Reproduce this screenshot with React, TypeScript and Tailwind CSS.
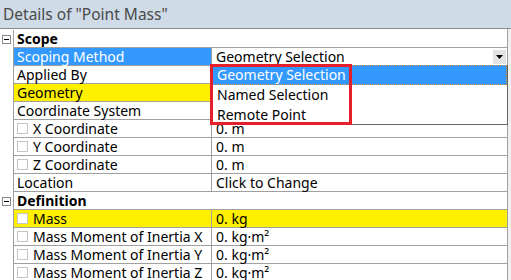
import React from "react";

type Row = {
  label: string;
  value?: string;
  check?: boolean;
  labelClass?: string;
  rowClass?: string;
  dropdown?: boolean;
};

function MinusBox() {
  return (
    <span className="flex h-[9px] w-[9px] items-center justify-center border border-[#8a8a8a] bg-white">
      <span className="h-px w-[5px] bg-black" />
    </span>
  );
}

function CheckBox() {
  return <span className="mr-[5px] inline-block h-[11px] w-[11px] shrink-0 border border-[#c4c4c4] bg-white" />;
}

function Section({ title }: { title: string }) {
  return (
    <div className="flex">
      <div className="flex w-[14px] shrink-0 items-center justify-center border-r border-[#a0a0a0] pr-px">
        <MinusBox />
      </div>
      <div className="flex h-[18px] flex-1 items-center border-b border-[#a0a0a0] pl-[3px] font-bold text-black">
        {title}
      </div>
    </div>
  );
}

function Prop({ row }: { row: Row }) {
  return (
    <div className={`flex ${row.rowClass ?? ""}`}>
      <div className="w-[14px] shrink-0 border-r border-[#a0a0a0] bg-white" />
      <div
        className={`flex h-[18px] w-[198px] shrink-0 items-center border-b border-r border-[#a0a0a0] pl-[3px] whitespace-nowrap ${
          row.labelClass ?? ""
        }`}
      >
        {row.check && <CheckBox />}
        {row.label}
      </div>
      <div className="flex h-[18px] flex-1 items-center justify-between border-b border-[#a0a0a0] pl-[4px] whitespace-nowrap">
        <span>{row.value}</span>
        {row.dropdown && (
          <span className="mr-px flex h-[14px] w-[13px] items-center justify-center bg-[#e3e3e3]">
            <svg width="7" height="4" viewBox="0 0 7 4">
              <path d="M0 0h7L3.5 4z" fill="#000" />
            </svg>
          </span>
        )}
      </div>
    </div>
  );
}

const scope: Row[] = [
  { label: "Scoping Method", value: "Geometry Selection", labelClass: "bg-[#3399ff] text-white", dropdown: true },
  { label: "Applied By", value: "" },
  { label: "Geometry", value: "", labelClass: "bg-[#fff000]" },
  { label: "Coordinate System", value: "" },
  { label: "X Coordinate", value: "0. m", check: true },
  { label: "Y Coordinate", value: "0. m", check: true },
  { label: "Z Coordinate", value: "0. m", check: true },
  { label: "Location", value: "Click to Change" },
];

const definition: Row[] = [
  { label: "Mass", value: "0. kg", check: true, rowClass: "[&>div:not(:first-child)]:bg-[#fff000]" },
  { label: "Mass Moment of Inertia X", value: "0. kg·m²", check: true },
  { label: "Mass Moment of Inertia Y", value: "0. kg·m²", check: true },
  { label: "Mass Moment of Inertia Z", value: "0. kg·m²", check: true },
];

export default function App() {
  return (
    <div className="relative h-[280px] w-[511px] overflow-hidden bg-[#f0f0f0] font-['Noto_Sans',sans-serif] text-[14px] leading-[18px] text-black">
      <div className="flex h-[29px] items-center border-b border-[#8c8c8c] bg-[#cfdbe7] pl-[3px] text-[15.5px] text-[#4a4a4a]">
        Details of "Point Mass"
      </div>

      <div className="w-[508px] border-r border-[#a0a0a0] bg-white pt-px">
        <Section title="Scope" />
        {scope.map((r) => (
          <Prop key={r.label} row={r} />
        ))}
        <Section title="Definition" />
        {definition.map((r) => (
          <Prop key={r.label} row={r} />
        ))}
      </div>

      {/* open dropdown list */}
      <div className="absolute left-[211px] top-[65px] flex h-[60px] w-[297px] flex-col border border-t-0 border-[#646464] bg-white">
        <div className="flex h-[20px] items-center border border-dotted border-[#d98c3c] bg-[#3399ff] pl-[4px] text-white">
          Geometry Selection
        </div>
        <div className="flex h-[20px] items-center pl-[5px]">Named Selection</div>
        <div className="flex h-[19px] items-center pl-[5px]">Remote Point</div>
      </div>

      {/* red highlight */}
      <div className="absolute left-[210px] top-[64px] h-[61px] w-[142px] border-[3px] border-[#e5202a]" />
    </div>
  );
}
